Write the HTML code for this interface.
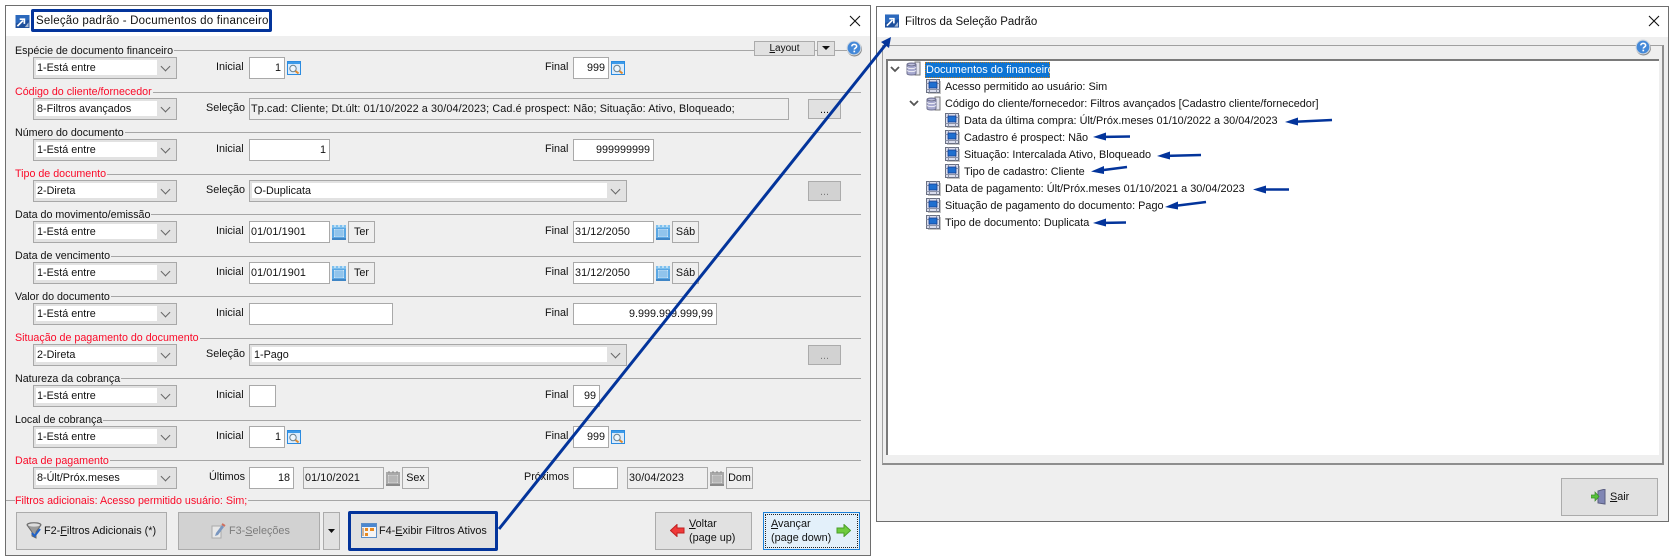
<!DOCTYPE html>
<html lang="pt"><head><meta charset="utf-8"><title>Filtros</title>
<style>
html,body{margin:0;padding:0;background:#fff}
#p{position:relative;width:1674px;height:560px;overflow:hidden;font:10.8px/16px "Liberation Sans",sans-serif;color:#111;background:#fff}
#p div,#p span.a,#p svg{position:absolute}
.w{background:#efefef;border:1px solid #6e6e6e;box-sizing:border-box}
.tb{background:#fff;left:0;right:0;top:0}
.ln{height:1px;background:#a6a6a6}
.t{white-space:nowrap}
.g{left:15px;background:#efefef;padding-right:1px;white-space:nowrap;height:16px;font-size:10.7px}
.r{color:#fa0a28}
.c{left:33px;width:144px;height:22px;box-sizing:border-box;border:1px solid #a8a8a8;background:#e2e2e2}
.c:before{content:"";position:absolute;left:2px;top:2px;width:121px;height:15px;background:#fff}
.c b{position:absolute;font-weight:400;left:3px;top:2px;line-height:17px;white-space:nowrap}
.c:after{content:"";position:absolute;right:7px;top:5px;width:6px;height:6px;border-right:1px solid #666;border-bottom:1px solid #666;transform:rotate(45deg)}
.l{text-align:right;white-space:nowrap;height:16px}
.i{height:22px;box-sizing:border-box;border:1px solid #a9a9a9;background:#fff;line-height:21px;text-align:right;padding-right:3px;white-space:nowrap}
.d{text-align:left;padding:0 0 0 1px;letter-spacing:.1px}
.o{background:#efefef}
.b{height:22px;width:27px;box-sizing:border-box;border:1px solid #a9a9a9;background:#efefef;text-align:center;line-height:21px}
.btn{box-sizing:border-box;border:1px solid #ababab;background:#e1e1e1;text-align:center}
.dis{background:#d2d2d2;color:#7c7c7c}
u{text-decoration:underline}
.tr{white-space:nowrap;height:17px;line-height:17px;font-size:10.9px}
</style></head><body><div id="p">

<svg width="0" height="0" style="left:0;top:0">
<defs>
<symbol id="logo" viewBox="0 0 15 14"><rect width="15" height="14" fill="#1d4f9c"/><path d="M0 0h15v5L0 9z" fill="#2c69bd"/><path d="M2 12l6-6M4.500 4.500H9.500V9.500" stroke="#fff" stroke-width="1.800" fill="none"/><path d="M10 13l4-5v5z" fill="#a9bcd8"/></symbol>
<symbol id="srch" viewBox="0 0 14 14"><rect x=".5" y=".5" width="13" height="13" fill="#dcecfb" stroke="#2b8be0"/><rect x="1" y="1" width="12" height="2" fill="#3d9be9"/><circle cx="6" cy="7.500" r="3.200" fill="#eef6fc" stroke="#69818f"/><path d="M8.500 10l3 2.500" stroke="#e08a2e" stroke-width="2"/></symbol>
<symbol id="cal" viewBox="0 0 14 15"><rect y="1" width="14" height="14" fill="#5ba7e3"/><rect x="0" y="0" width="14" height="3" fill="#7ec0ee"/><path d="M3 0v2M7 0v2M11 0v2" stroke="#fff"/><g fill="#cfe6f7"><rect x="2" y="4" width="10" height="8"/></g><path d="M2 6h10M2 8h10M2 10h10M4 4v8M6 4v8M8 4v8M10 4v8" stroke="#6cb0e6" stroke-width=".8"/><rect y="13" width="14" height="2" fill="#3f85c5"/></symbol>
<symbol id="calg" viewBox="0 0 14 15"><rect y="1" width="14" height="14" fill="#a9a9a9"/><path d="M3 0v2M7 0v2M11 0v2" stroke="#888"/><rect x="2" y="4" width="10" height="8" fill="#dcdcdc"/><path d="M2 6h10M2 8h10M2 10h10M4 4v8M6 4v8M8 4v8M10 4v8" stroke="#a0a0a0" stroke-width=".8"/><rect y="13" width="14" height="2" fill="#8a8a8a"/></symbol>
<symbol id="tb" viewBox="0 0 15 15"><rect x=".5" y=".5" width="13" height="13" fill="#d9dcec" stroke="#6a7082"/><path d="M.5 4.500h13M.5 10.500h13M3.500.5v13M10.500.5v13" stroke="#8d93a8"/><rect x="3" y="3" width="8" height="6" fill="#1f6fd0" stroke="#1a3f90" stroke-width=".8"/><path d="M14.500 2v12.500H2" stroke="#c4c4c4" fill="none"/></symbol>
<symbol id="db" viewBox="0 0 15 15"><rect x="9" y="1" width="5" height="13" fill="#e4e4ee" stroke="#777"/><path d="M1 3.500C1 1.500 10 1.500 10 3.500V12.500C10 14.500 1 14.500 1 12.500Z" fill="#a7a9cf" stroke="#6d6f8d"/><path d="M1 6.500c2 1.500 7 1.500 9 0M1 9.500c2 1.500 7 1.500 9 0" stroke="#f2f2f8" fill="none"/><path d="M1 3.500c2 1.800 7 1.800 9 0" stroke="#6d6f8d" fill="#d6d7ea"/></symbol>
<symbol id="help" viewBox="0 0 16 16"><circle cx="8" cy="8.500" r="7" fill="#888"/><circle cx="7.500" cy="7.500" r="6.500" fill="#4388d8" stroke="#d0d8e0"/><path d="M5.500 6c0-2.500 4.500-2.500 4.500 0 0 1.500-2 1.500-2.200 3" stroke="#fff" stroke-width="1.500" fill="none"/><rect x="7" y="10" width="1.600" height="1.600" fill="#fff"/></symbol>
</defs></svg>

<!-- window 1 -->
<div class="w" style="left:5px;top:5px;width:866px;height:551px"></div>
<div class="tb" style="left:6px;right:auto;top:6px;width:864px;height:30px"></div>
<svg style="left:15px;top:15px" width="15" height="13"><use href="#logo"/></svg>
<div style="left:31px;top:9px;width:241px;height:23px;box-sizing:border-box;border:3px solid #03349b;border-radius:2px;background:#fff"></div>
<div class="t" style="left:36px;top:13px;font-size:11.5px;letter-spacing:.2px;color:#111">Seleção padrão - Documentos do financeiro</div>
<svg style="left:849px;top:15px" width="12" height="12"><path d="M1 1l10 10M11 1L1 11" stroke="#111" stroke-width="1.100"/></svg>

<div class="ln" style="left:15px;top:50px;width:846px"></div>
<div class="ln" style="left:15px;top:92px;width:846px"></div>
<div class="ln" style="left:15px;top:132px;width:846px"></div>
<div class="ln" style="left:15px;top:174px;width:846px"></div>
<div class="ln" style="left:15px;top:214px;width:846px"></div>
<div class="ln" style="left:15px;top:256px;width:846px"></div>
<div class="ln" style="left:15px;top:296px;width:846px"></div>
<div class="ln" style="left:15px;top:338px;width:846px"></div>
<div class="ln" style="left:15px;top:378px;width:846px"></div>
<div class="ln" style="left:15px;top:420px;width:846px"></div>
<div class="ln" style="left:15px;top:460px;width:846px"></div>
<div class="ln" style="left:6px;top:500px;width:864px"></div>

<div class="g" style="top:43px">Espécie de documento financeiro</div>
<div class="g r" style="top:84px">Código do cliente/fornecedor</div>
<div class="g" style="top:125px">Número do documento</div>
<div class="g r" style="top:166px">Tipo de documento</div>
<div class="g" style="top:207px">Data do movimento/emissão</div>
<div class="g" style="top:248px">Data de vencimento</div>
<div class="g" style="top:289px">Valor do documento</div>
<div class="g r" style="top:330px">Situação de pagamento do documento</div>
<div class="g" style="top:371px">Natureza da cobrança</div>
<div class="g" style="top:412px">Local de cobrança</div>
<div class="g r" style="top:453px">Data de pagamento</div>
<div class="g r" style="top:493px">Filtros adicionais: Acesso permitido usuário: Sim;</div>

<div class="btn" style="left:754px;top:41px;width:61px;height:15px;line-height:14px;font-size:10px"><u>L</u>ayout</div>
<div class="btn" style="left:817px;top:41px;width:18px;height:15px"></div>
<svg style="left:822px;top:46px" width="8" height="5"><path d="M0 0h8L4 4z" fill="#111"/></svg>
<svg style="left:846px;top:40px" width="17" height="17"><use href="#help"/></svg>

<!-- rows -->
<div class="c" style="top:57px"><b>1-Está entre</b></div>
<div class="l" style="left:216px;top:59px">Inicial</div>
<div class="i" style="left:249px;top:57px;width:36px">1</div>
<svg style="left:287px;top:61px" width="14" height="14"><use href="#srch"/></svg>
<div class="l" style="left:545px;top:59px">Final</div>
<div class="i" style="left:573px;top:57px;width:36px">999</div>
<svg style="left:611px;top:61px" width="14" height="14"><use href="#srch"/></svg>

<div class="c" style="top:98px"><b>8-Filtros avançados</b></div>
<div class="l" style="left:206px;top:100px">Seleção</div>
<div class="i o d" style="left:249px;top:98px;width:540px;padding-left:1px;letter-spacing:.11px">Tp.cad: Cliente; Dt.últ: 01/10/2022 a 30/04/2023; Cad.é prospect: Não; Situação: Ativo, Bloqueado;</div>
<div class="btn" style="left:808px;top:99px;width:33px;height:20px;line-height:20px">...</div>

<div class="c" style="top:139px"><b>1-Está entre</b></div>
<div class="l" style="left:216px;top:141px">Inicial</div>
<div class="i" style="left:249px;top:139px;width:81px">1</div>
<div class="l" style="left:545px;top:141px">Final</div>
<div class="i" style="left:573px;top:139px;width:81px">999999999</div>

<div class="c" style="top:180px"><b>2-Direta</b></div>
<div class="l" style="left:206px;top:182px">Seleção</div>
<div class="c" style="left:249px;top:180px;width:378px"><span class="a" style="left:2px;top:2px;width:355px;height:15px;background:#fff"></span><b style="left:4px">O-Duplicata</b></div>
<div class="btn dis" style="left:808px;top:181px;width:33px;height:20px;line-height:20px">...</div>

<div class="c" style="top:221px"><b>1-Está entre</b></div>
<div class="l" style="left:216px;top:223px">Inicial</div>
<div class="i d" style="left:249px;top:221px;width:81px">01/01/1901</div>
<svg style="left:332px;top:225px" width="14" height="15"><use href="#cal"/></svg>
<div class="b" style="left:348px;top:221px">Ter</div>
<div class="l" style="left:545px;top:223px">Final</div>
<div class="i d" style="left:573px;top:221px;width:81px">31/12/2050</div>
<svg style="left:656px;top:225px" width="14" height="15"><use href="#cal"/></svg>
<div class="b" style="left:672px;top:221px">Sáb</div>

<div class="c" style="top:262px"><b>1-Está entre</b></div>
<div class="l" style="left:216px;top:264px">Inicial</div>
<div class="i d" style="left:249px;top:262px;width:81px">01/01/1901</div>
<svg style="left:332px;top:266px" width="14" height="15"><use href="#cal"/></svg>
<div class="b" style="left:348px;top:262px">Ter</div>
<div class="l" style="left:545px;top:264px">Final</div>
<div class="i d" style="left:573px;top:262px;width:81px">31/12/2050</div>
<svg style="left:656px;top:266px" width="14" height="15"><use href="#cal"/></svg>
<div class="b" style="left:672px;top:262px">Sáb</div>

<div class="c" style="top:303px"><b>1-Está entre</b></div>
<div class="l" style="left:216px;top:305px">Inicial</div>
<div class="i" style="left:249px;top:303px;width:144px"></div>
<div class="l" style="left:545px;top:305px">Final</div>
<div class="i" style="left:573px;top:303px;width:144px">9.999.999.999,99</div>

<div class="c" style="top:344px"><b>2-Direta</b></div>
<div class="l" style="left:206px;top:346px">Seleção</div>
<div class="c" style="left:249px;top:344px;width:378px"><span class="a" style="left:2px;top:2px;width:355px;height:15px;background:#fff"></span><b style="left:4px">1-Pago</b></div>
<div class="btn dis" style="left:808px;top:345px;width:33px;height:20px;line-height:20px">...</div>

<div class="c" style="top:385px"><b>1-Está entre</b></div>
<div class="l" style="left:216px;top:387px">Inicial</div>
<div class="i" style="left:249px;top:385px;width:27px"></div>
<div class="l" style="left:545px;top:387px">Final</div>
<div class="i" style="left:573px;top:385px;width:27px">99</div>

<div class="c" style="top:426px"><b>1-Está entre</b></div>
<div class="l" style="left:216px;top:428px">Inicial</div>
<div class="i" style="left:249px;top:426px;width:36px">1</div>
<svg style="left:287px;top:430px" width="14" height="14"><use href="#srch"/></svg>
<div class="l" style="left:545px;top:428px">Final</div>
<div class="i" style="left:573px;top:426px;width:36px">999</div>
<svg style="left:611px;top:430px" width="14" height="14"><use href="#srch"/></svg>

<div class="c" style="top:467px"><b>8-Últ/Próx.meses</b></div>
<div class="l" style="left:209px;top:469px">Últimos</div>
<div class="i" style="left:249px;top:467px;width:45px">18</div>
<div class="i o d" style="left:303px;top:467px;width:81px">01/10/2021</div>
<svg style="left:386px;top:471px" width="14" height="15"><use href="#calg"/></svg>
<div class="b" style="left:402px;top:467px">Sex</div>
<div class="l" style="left:524px;top:469px">Próximos</div>
<div class="i" style="left:573px;top:467px;width:45px"></div>
<div class="i o d" style="left:627px;top:467px;width:81px">30/04/2023</div>
<svg style="left:710px;top:471px" width="14" height="15"><use href="#calg"/></svg>
<div class="b" style="left:726px;top:467px">Dom</div>

<!-- bottom buttons -->
<div class="btn" style="left:16px;top:512px;width:151px;height:38px"></div>
<svg style="left:26px;top:522px" width="17" height="18"><path d="M1 3c0-3 14-3 14 0L10 10v6l-4-2V10z" fill="#9a9a9a" stroke="#666"/><ellipse cx="8" cy="3" rx="6" ry="1.600" fill="#ddd"/><path d="M6 11l2.500 3L14 7" stroke="#1f62c8" stroke-width="2" fill="none"/></svg>
<div class="t" style="left:44px;top:523px;font-size:10.85px">F2-<u>F</u>iltros Adicionais (*)</div>
<div class="btn dis" style="left:178px;top:512px;width:142px;height:38px"></div>
<svg style="left:211px;top:523px" width="15" height="16"><path d="M1 3h9v12H1z" fill="#e8e8e8" stroke="#aaa"/><path d="M5 10l6-8 2 2-6 8-3 1z" fill="#7a97c0"/><path d="M11 1l3 2" stroke="#d07060" stroke-width="2"/></svg>
<div class="t" style="left:229px;top:523px;font-size:10.85px;color:#7c7c7c">F3-<u>S</u>eleções</div>
<div class="btn" style="left:323px;top:512px;width:17px;height:38px"></div>
<svg style="left:328px;top:529px" width="8" height="5"><path d="M0 0h7L3.500 4z" fill="#111"/></svg>
<div class="btn" style="left:348px;top:511px;width:150px;height:40px;border:3px solid #03349b;border-radius:2px"></div>
<svg style="left:361px;top:523px" width="16" height="15"><rect x=".5" y=".5" width="15" height="14" fill="#f4f4f4" stroke="#5b8ec8"/><rect x="1" y="1" width="14" height="3" fill="#4b87cf"/><rect x="4" y="5" width="3" height="3" fill="#e88a20"/><rect x="9" y="5" width="4" height="3" fill="#e88a20"/><rect x="4" y="10" width="3" height="3" fill="#e88a20"/><path d="M2 5v8" stroke="#b07030"/></svg>
<div class="t" style="left:379px;top:523px;font-size:10.85px">F4-<u>E</u>xibir Filtros Ativos</div>
<div class="btn" style="left:655px;top:512px;width:97px;height:38px"></div>
<svg style="left:670px;top:524px" width="15" height="13"><path d="M.5 6.500L7 .5V4h7v5H7v3.500z" fill="#f03a3a" stroke="#c02020"/></svg>
<div class="t" style="left:689px;top:517px;font-size:10.85px;line-height:14px"><u>V</u>oltar<br>(page up)</div>
<div class="btn" style="left:763px;top:512px;width:97px;height:38px;border:1px solid #1c80d8;background:#e3f0fa"></div>
<div style="left:765px;top:514px;width:93px;height:34px;box-sizing:border-box;border:1px dotted #222"></div>
<div class="t" style="left:771px;top:517px;font-size:10.85px;line-height:14px"><u>A</u>vançar<br>(page down)</div>
<svg style="left:836px;top:524px" width="15" height="13"><path d="M14.500 6.500L8 .5V4H1v5h7v3.500z" fill="#6ecc3e" stroke="#4a9e2a"/></svg>

<!-- window 2 -->
<div class="w" style="left:876px;top:6px;width:793px;height:516px"></div>
<div class="tb" style="left:877px;right:auto;top:7px;width:791px;height:30px"></div>
<svg style="left:885px;top:14px" width="14" height="14"><use href="#logo"/></svg>
<div class="t" style="left:905px;top:14px;font-size:11.5px">Filtros da Seleção Padrão</div>
<svg style="left:1648px;top:15px" width="12" height="12"><path d="M1 1l10 10M11 1L1 11" stroke="#111" stroke-width="1.100"/></svg>

<div style="left:882px;top:45px;width:782px;height:420px;box-sizing:border-box;border:1px solid #a0a0a0;border-right:2px solid #8e8e8e;border-bottom:2px solid #8e8e8e;background:#efefef"></div>
<div style="left:886px;top:59px;width:773px;height:396px;box-sizing:border-box;background:#fff;border-top:2px solid #7a7a7a;border-left:2px solid #7a7a7a"></div>
<svg style="left:1635px;top:39px" width="17" height="17"><use href="#help"/></svg>

<svg style="left:890px;top:66px" width="11" height="8"><path d="M1 1l4 4 4-4" stroke="#555" stroke-width="1.800" fill="none"/></svg>
<svg style="left:906px;top:61px" width="15" height="15"><use href="#db"/></svg>
<div style="left:925px;top:62px;width:125px;height:16px;background:#0d74d4;border:1px dotted #c27c1c;box-sizing:border-box"></div>
<div class="tr" style="left:926px;top:62px;color:#fff;line-height:16px;font-size:11px">Documentos do financeiro</div>

<svg style="left:926px;top:79px" width="15" height="15"><use href="#tb"/></svg>
<div class="tr" style="left:945px;top:79px">Acesso permitido ao usuário: Sim</div>
<svg style="left:909px;top:100px" width="11" height="8"><path d="M1 1l4 4 4-4" stroke="#555" stroke-width="1.800" fill="none"/></svg>
<svg style="left:926px;top:96px" width="15" height="15"><use href="#db"/></svg>
<div class="tr" style="left:945px;top:96px">Código do cliente/fornecedor: Filtros avançados [Cadastro cliente/fornecedor]</div>
<svg style="left:945px;top:113px" width="15" height="15"><use href="#tb"/></svg>
<div class="tr" style="left:964px;top:113px">Data da última compra: Últ/Próx.meses 01/10/2022 a 30/04/2023</div>
<svg style="left:945px;top:130px" width="15" height="15"><use href="#tb"/></svg>
<div class="tr" style="left:964px;top:130px">Cadastro é prospect: Não</div>
<svg style="left:945px;top:147px" width="15" height="15"><use href="#tb"/></svg>
<div class="tr" style="left:964px;top:147px">Situação: Intercalada Ativo, Bloqueado</div>
<svg style="left:945px;top:164px" width="15" height="15"><use href="#tb"/></svg>
<div class="tr" style="left:964px;top:164px">Tipo de cadastro: Cliente</div>
<svg style="left:926px;top:181px" width="15" height="15"><use href="#tb"/></svg>
<div class="tr" style="left:945px;top:181px">Data de pagamento: Últ/Próx.meses 01/10/2021 a 30/04/2023</div>
<svg style="left:926px;top:198px" width="15" height="15"><use href="#tb"/></svg>
<div class="tr" style="left:945px;top:198px">Situação de pagamento do documento: Pago</div>
<svg style="left:926px;top:215px" width="15" height="15"><use href="#tb"/></svg>
<div class="tr" style="left:945px;top:215px">Tipo de documento: Duplicata</div>

<div class="btn" style="left:1561px;top:478px;width:97px;height:38px"></div>
<svg style="left:1591px;top:489px" width="16" height="16"><path d="M7 2l7-2v15l-7-1z" fill="#8086b4" stroke="#5a5e80"/><path d="M0 6h4V3l4 4.500-4 4.500V9H0z" fill="#56c23a" stroke="#3a8a28" stroke-width=".7"/></svg>
<div class="t" style="left:1610px;top:489px;font-size:10.85px"><u>S</u>air</div>

<!-- annotation arrows -->
<svg style="left:0;top:0" width="1674" height="560">
<g stroke="#03349b" fill="#03349b">
<path d="M499 529L887 43" stroke-width="3" fill="none"/>
<path d="M891 37l-2 11-8-6z" stroke="none"/>
<g stroke-width="2.400" fill="none">
<path d="M1290 122L1332 120"/>
<path d="M1098 137L1130 136.500"/>
<path d="M1162 156L1201 155"/>
<path d="M1096 171L1127 167"/>
<path d="M1258 189.500L1289 189.500"/>
<path d="M1170 206.500L1206 202"/>
<path d="M1098 223L1126 222.500"/>
</g>
<g stroke="none">
<path d="M1285 122l13-4.500v8z"/>
<path d="M1093 137l13-4.500v8z"/>
<path d="M1157 156l13-4.500v8z"/>
<path d="M1091 171.500l13-5.500v8z"/>
<path d="M1253 189.500l13-4v8z"/>
<path d="M1165 207l13-5.500v8z"/>
<path d="M1093 223l13-4.500v8z"/>
</g>
</g>
</svg>
</div></body></html>
